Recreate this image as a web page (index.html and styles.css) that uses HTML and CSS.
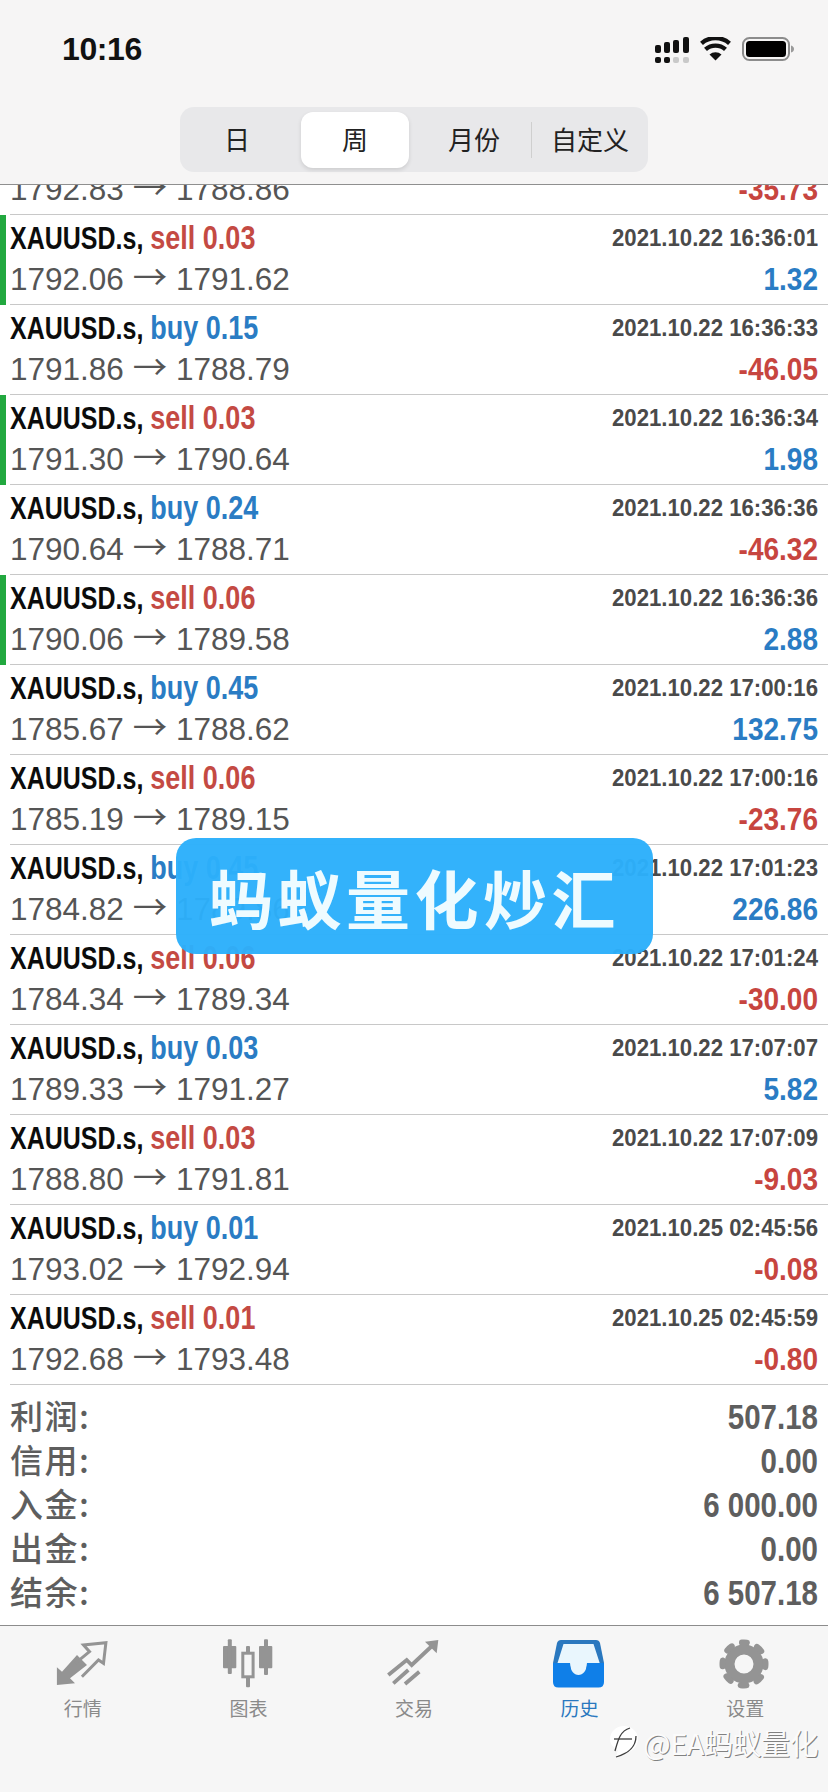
FILE: index.html
```html
<!DOCTYPE html>
<html lang="zh">
<head>
<meta charset="utf-8">
<title>历史</title>
<link rel="stylesheet" href="styles.css">
</head>
<body>
<div class="app">
  <header class="top">
    <div class="status">
      <span class="time">10:16</span>
      <div class="status-icons">
        <svg class="ic-signal" width="34" height="26" viewBox="0 0 34 26"><g fill="#111"><rect x="0" y="8" width="6" height="8" rx="2"/><rect x="9" y="5" width="6" height="11" rx="2"/><rect x="18" y="3" width="6" height="13" rx="2"/><rect x="28" y="0" width="6" height="16" rx="2"/><rect x="0" y="20" width="6" height="6" rx="2"/><rect x="9" y="20" width="6" height="6" rx="2"/></g><g fill="#c9c9c9"><rect x="18" y="20" width="6" height="6" rx="2"/><rect x="28" y="20" width="6" height="6" rx="2"/></g></svg>
        <svg class="ic-wifi" width="31" height="24" viewBox="0 0 31 24"><path d="M15.500 23.500 9.500 17.500a9 9 0 0 1 12 0z" fill="#111"/><path d="M5.500 12.400a15 15 0 0 1 20 0M1.500 6.300a21.500 21.500 0 0 1 28 0" fill="none" stroke="#111" stroke-width="4.400"/></svg>
        <svg class="ic-batt" width="52" height="24" viewBox="0 0 52 24"><rect x="1" y="1" width="46" height="22" rx="6.500" fill="none" stroke="#8c8c8c" stroke-width="2"/><rect x="4" y="4" width="40" height="16" rx="3.500" fill="#000"/><path d="M49 8.500Q52 9.500 52 12T49 15.500z" fill="#9a9a9a"/></svg>
      </div>
    </div>
    <nav class="segments">
      <span class="seg">日</span>
      <span class="seg seg-on">周</span>
      <span class="seg seg-div">月份</span>
      <span class="seg">自定义</span>
    </nav>
  </header>

  <main class="list">
    <div class="row row-cut">
      <div class="line l2"><span class="price">1792.83 <span class="arr">→</span> 1788.86</span><span class="pl neg">-35.73</span></div>
    </div>
    <div class="row flag">
      <div class="line"><span class="sym">XAUUSD.s, <span class="sell">sell 0.03</span></span><span class="date">2021.10.22 16:36:01</span></div>
      <div class="line l2"><span class="price">1792.06 <span class="arr">→</span> 1791.62</span><span class="pl pos">1.32</span></div>
    </div>
    <div class="row">
      <div class="line"><span class="sym">XAUUSD.s, <span class="buy">buy 0.15</span></span><span class="date">2021.10.22 16:36:33</span></div>
      <div class="line l2"><span class="price">1791.86 <span class="arr">→</span> 1788.79</span><span class="pl neg">-46.05</span></div>
    </div>
    <div class="row flag">
      <div class="line"><span class="sym">XAUUSD.s, <span class="sell">sell 0.03</span></span><span class="date">2021.10.22 16:36:34</span></div>
      <div class="line l2"><span class="price">1791.30 <span class="arr">→</span> 1790.64</span><span class="pl pos">1.98</span></div>
    </div>
    <div class="row">
      <div class="line"><span class="sym">XAUUSD.s, <span class="buy">buy 0.24</span></span><span class="date">2021.10.22 16:36:36</span></div>
      <div class="line l2"><span class="price">1790.64 <span class="arr">→</span> 1788.71</span><span class="pl neg">-46.32</span></div>
    </div>
    <div class="row flag">
      <div class="line"><span class="sym">XAUUSD.s, <span class="sell">sell 0.06</span></span><span class="date">2021.10.22 16:36:36</span></div>
      <div class="line l2"><span class="price">1790.06 <span class="arr">→</span> 1789.58</span><span class="pl pos">2.88</span></div>
    </div>
    <div class="row">
      <div class="line"><span class="sym">XAUUSD.s, <span class="buy">buy 0.45</span></span><span class="date">2021.10.22 17:00:16</span></div>
      <div class="line l2"><span class="price">1785.67 <span class="arr">→</span> 1788.62</span><span class="pl pos">132.75</span></div>
    </div>
    <div class="row">
      <div class="line"><span class="sym">XAUUSD.s, <span class="sell">sell 0.06</span></span><span class="date">2021.10.22 17:00:16</span></div>
      <div class="line l2"><span class="price">1785.19 <span class="arr">→</span> 1789.15</span><span class="pl neg">-23.76</span></div>
    </div>
    <div class="row">
      <div class="line"><span class="sym">XAUUSD.s, <span class="buy">buy 0.45</span></span><span class="date">2021.10.22 17:01:23</span></div>
      <div class="line l2"><span class="price">1784.82 <span class="arr">→</span> 1789.86</span><span class="pl pos">226.86</span></div>
    </div>
    <div class="row">
      <div class="line"><span class="sym">XAUUSD.s, <span class="sell">sell 0.06</span></span><span class="date">2021.10.22 17:01:24</span></div>
      <div class="line l2"><span class="price">1784.34 <span class="arr">→</span> 1789.34</span><span class="pl neg">-30.00</span></div>
    </div>
    <div class="row">
      <div class="line"><span class="sym">XAUUSD.s, <span class="buy">buy 0.03</span></span><span class="date">2021.10.22 17:07:07</span></div>
      <div class="line l2"><span class="price">1789.33 <span class="arr">→</span> 1791.27</span><span class="pl pos">5.82</span></div>
    </div>
    <div class="row">
      <div class="line"><span class="sym">XAUUSD.s, <span class="sell">sell 0.03</span></span><span class="date">2021.10.22 17:07:09</span></div>
      <div class="line l2"><span class="price">1788.80 <span class="arr">→</span> 1791.81</span><span class="pl neg">-9.03</span></div>
    </div>
    <div class="row">
      <div class="line"><span class="sym">XAUUSD.s, <span class="buy">buy 0.01</span></span><span class="date">2021.10.25 02:45:56</span></div>
      <div class="line l2"><span class="price">1793.02 <span class="arr">→</span> 1792.94</span><span class="pl neg">-0.08</span></div>
    </div>
    <div class="row">
      <div class="line"><span class="sym">XAUUSD.s, <span class="sell">sell 0.01</span></span><span class="date">2021.10.25 02:45:59</span></div>
      <div class="line l2"><span class="price">1792.68 <span class="arr">→</span> 1793.48</span><span class="pl neg">-0.80</span></div>
    </div>
    <section class="summary">
      <div class="sum"><span class="sum-k">利润:</span><span class="sum-v">507.18</span></div>
      <div class="sum"><span class="sum-k">信用:</span><span class="sum-v">0.00</span></div>
      <div class="sum"><span class="sum-k">入金:</span><span class="sum-v">6 000.00</span></div>
      <div class="sum"><span class="sum-k">出金:</span><span class="sum-v">0.00</span></div>
      <div class="sum"><span class="sum-k">结余:</span><span class="sum-v">6 507.18</span></div>
    </section>
  </main>

  <footer class="tabs">
    <div class="tab">
      <svg width="54" height="50" viewBox="0 0 54 50"><path d="M0.900 28.300V46L19 44.300 14 39.300 31 26 21 16 6 32.700z" fill="#949494"/><path d="M25.900 37.700 42.500 21 47.500 24.300 49.900 3.700 27.500 6 33.500 12.700 19.200 24.300" fill="none" stroke="#949494" stroke-width="3"/></svg>
      <span class="tab-t">行情</span>
    </div>
    <div class="tab">
      <svg width="54" height="50" viewBox="0 0 54 50"><g fill="#949494"><rect x="2" y="7" width="13.300" height="22.300" rx="1"/><rect x="6.800" y="0.300" width="4" height="34.700" rx="1"/><rect x="38" y="7" width="13.300" height="22.300" rx="1"/><rect x="43" y="0.300" width="4" height="35.700" rx="1"/><rect x="25" y="7" width="4" height="41.300" rx="1"/></g><rect x="21.800" y="14.200" width="10.300" height="23.600" fill="#f6f6f6" stroke="#949494" stroke-width="3"/></svg>
      <span class="tab-t">图表</span>
    </div>
    <div class="tab">
      <svg width="54" height="50" viewBox="0 0 54 50"><g fill="none" stroke="#949494" stroke-width="3.800"><path d="M1.300 36 19.700 21 24.700 26 46 6"/><path d="M6.300 44.300 21.300 31M18 45 32.300 32.700"/></g><path d="M38 2.700 51.300 1 49.700 14.300z" fill="#949494"/></svg>
      <span class="tab-t">交易</span>
    </div>
    <div class="tab tab-on">
      <svg width="54" height="50" viewBox="0 0 54 50"><path d="M8 1H43Q46 1 47 4L51 24V30H0V24L4 4Q5 1 8 1Z" fill="#2a78bf"/><path d="M10.500 5H40.500L46.700 24H34C34 40 17 40 17 24H4.500Z" fill="#e9f6fd"/><path d="M0 24H17C17 40 34 40 34 24H51V43Q51 48.500 45.500 48.500H5.500Q0 48.500 0 43Z" fill="#0f7fe8"/></svg>
      <span class="tab-t">历史</span>
    </div>
    <div class="tab">
      <svg width="54" height="50" viewBox="0 0 54 50"><g fill="none" stroke="#949494"><circle cx="26" cy="25" r="14.500" stroke-width="10"/><circle cx="26" cy="25" r="21.500" stroke-width="6" stroke-linecap="round" stroke-dasharray="6 10.890" stroke-dashoffset="3" transform="rotate(-90 26 25)"/></g></svg>
      <span class="tab-t">设置</span>
    </div>
  </footer>

  <div class="banner">蚂蚁量化炒汇</div>
  <div class="mark"><svg width="28" height="32" viewBox="0 0 28 32"><path d="M6 31 8 24C2 21 0 17 0 13 0 6 6 0 14 0S28 6 28 13 22 27 14 27Z" fill="#fff"/><g fill="none" stroke="#3c3c3c" stroke-width="1.300"><path d="M6 31 C16 28 26 23 26 10"/><path d="M5 25C8 14 10 5 20 2"/><path d="M4 13H22"/></g></svg><span class="mark-t">@EA蚂蚁量化</span></div>
</div>
</body>
</html>
```
FILE: styles.css
```css
* { box-sizing: border-box; }
html, body { margin: 0; padding: 0; }
body { width: 828px; height: 1792px; overflow: hidden; background: #fff; font-family: "Liberation Sans", "Noto Sans CJK SC", sans-serif; }
.app { position: relative; width: 828px; height: 1792px; display: flex; flex-direction: column; }

.top { height: 185px; background: #f6f5f5; border-bottom: 1px solid #8f8f8f; flex: none; position: relative; z-index: 1; }
.status { height: 107px; padding: 33px 34px 0 62px; display: flex; justify-content: space-between; align-items: flex-start; }
.time { font-size: 32px; line-height: 32px; font-weight: 700; color: #111; letter-spacing: -0.4px; }
.status-icons { display: flex; gap: 11px; padding-top: 4px; align-items: flex-start; }

.segments { margin-left: 180px; width: 468px; height: 65px; background: #e8e8ea; border-radius: 14px; display: grid; grid-template-columns: 114px 122px 116px 116px; align-items: center; padding: 5px 0; }
.seg { height: 56px; padding-bottom: 3px; display: flex; align-items: center; justify-content: center; font-size: 26px; color: #222; font-family: "Noto Sans CJK SC", sans-serif; position: relative; }
.seg-on { background: #fff; border-radius: 12px; width: 108px; justify-self: center; box-shadow: 0 2px 4px rgba(0,0,0,.12); }
.seg-div::after { content: ""; position: absolute; right: 0; top: 10px; bottom: 10px; width: 1px; background: #cfcfcf; }

.list { flex: 1; overflow: hidden; }
.row { height: 90px; margin-left: 10px; border-bottom: 1px solid #c8c8c8; padding: 2px 10px 4px 0; position: relative; display: flex; flex-direction: column; }
.row-cut { height: 30px; padding-top: 0; justify-content: flex-end; overflow: hidden; }
.flag::before { content: ""; position: absolute; left: -10px; top: 0; bottom: -1px; width: 6px; background: #22a83f; }
.line { height: 42px; flex: none; display: flex; justify-content: space-between; align-items: center; white-space: nowrap; }
.l2 { height: 41px; }
.sym, .date, .pl { display: inline-block; }
.sym { font-size: 25px; font-weight: 700; color: #0c0c0c; transform: scaleY(1.22); transform-origin: left center; }
.sell, .buy { font-size: 27px; }
.sell { color: #c44a43; }
.buy { color: #2a7cc4; }
.date { font-size: 22.200px; font-weight: 700; color: #4a4a4a; transform: scaleY(1.08); transform-origin: right center; }
.price { font-size: 31.500px; color: #555; }
.arr { font-family: "Noto Sans CJK SC", sans-serif; font-size: 34.500px; line-height: 0; }
.pl { font-size: 28px; font-weight: 700; transform: scaleY(1.12); transform-origin: right center; }
.neg { color: #c7453f; }
.pos { color: #2a7cc4; }

.summary { padding: 10px 10px 0 10px; display: flex; flex-direction: column; }
.sum { height: 44px; display: flex; justify-content: space-between; align-items: center; color: #5e5e5e; font-weight: 700; }
.sum-k { font-size: 33px; line-height: 44px; padding-bottom: 4px; letter-spacing: 1.500px; font-family: "Noto Sans CJK SC", sans-serif; font-weight: 500; }
.sum-v { font-size: 29.500px; display: inline-block; transform: scaleY(1.18); transform-origin: right center; }

.tabs { height: 167px; flex: none; background: #f6f6f6; border-top: 1px solid #8c8c8c; display: grid; grid-template-columns: repeat(5, 165.600px); padding-top: 13px; }
.tab { display: flex; flex-direction: column; align-items: center; gap: 6px; }
.tab-t { font-size: 19px; line-height: 26px; color: #8a8a8a; font-family: "Noto Sans CJK SC", sans-serif; }
.tab-on .tab-t { color: #2a78bf; }

.banner { position: absolute; left: 176px; top: 838px; width: 477px; height: 116px; background: rgba(44,176,251,.97); border-radius: 20px; color: #eefbff; font-family: "Noto Sans CJK SC", sans-serif; font-weight: 700; font-size: 64px; letter-spacing: 4.500px; display: flex; align-items: center; justify-content: center; }
.mark { position: absolute; right: 10px; top: 1726px; display: flex; align-items: flex-start; gap: 5px; }
.mark-t { font-family: "Noto Sans CJK SC", sans-serif; font-size: 29px; line-height: 32px; color: #fbfbfb; text-shadow: 1px 1px 0 rgba(50,50,50,.6); letter-spacing: -0.5px; }
```
